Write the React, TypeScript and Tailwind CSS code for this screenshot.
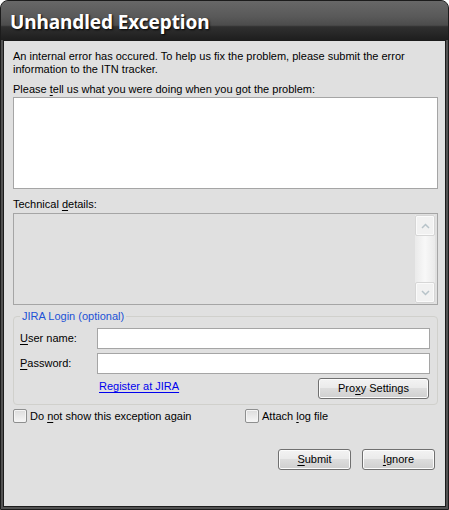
import React from "react";

const U = ({ children }: { children: React.ReactNode }) => (
  <span className="underline underline-offset-[2px]">{children}</span>
);

function Btn({ children, className = "" }: { children: React.ReactNode; className?: string }) {
  return (
    <div
      className={
        "flex items-center justify-center rounded-[3px] border border-[#707070] bg-[linear-gradient(#f3f3f3,#ebebeb_45%,#dddddd_50%,#cfcfcf)] shadow-[inset_0_0_0_1px_#fcfcfc] text-[11px] text-black " +
        className
      }
    >
      {children}
    </div>
  );
}

function Check({ children, className = "" }: { children: React.ReactNode; className?: string }) {
  return (
    <div className={"flex items-center gap-[3px] " + className}>
      <div className="w-[14px] h-[14px] border border-[#8e8f8f] rounded-[2px] bg-[linear-gradient(#dcdcdc,#f6f6f6)] shadow-[inset_0_0_0_1px_#f4f4f4]" />
      <span>{children}</span>
    </div>
  );
}

export default function App() {
  return (
    <div
      className="w-[449px] h-[510px] bg-white"
      style={{ fontFamily: '"Liberation Sans", Arial, sans-serif' }}
    >
      <div className="w-[449px] h-[510px] border border-[#1c1c1c] rounded-t-[8px] bg-[#525252] flex flex-col overflow-hidden">
        <div className="h-[39px] shrink-0 bg-[linear-gradient(#686868,#595959_40%,#4c4c4c_62%,#303030_66%,#1e1e1e)] flex items-center pl-[9px] pt-[3px]">
          <span
            className="text-white font-bold text-[19px] tracking-[-0.1px]"
            style={{ fontFamily: '"Noto Sans", sans-serif', textShadow: "1px 1px 2px #000" }}
          >
            Unhandled Exception
          </span>
        </div>
        <div className="flex-1 mx-[2px] mb-[2px] border border-[#1c1c1c] bg-[#e0e0e0] pl-[9px] pr-[7px] pt-[9px] text-[11px] leading-[13px] text-black flex flex-col">
          <div>
            An internal error has occured. To help us fix the problem, please submit the error
            <br />
            information to the ITN tracker.
          </div>
          <div className="mt-[7px]">
            Please <U>t</U>ell us what you were doing when you got the problem:
          </div>
          <div className="mt-[1px] h-[92px] border border-[#a5a5a5] bg-white" />
          <div className="mt-[9px]">
            Technical <U>d</U>etails:
          </div>
          <div className="mt-[2px] h-[92px] border border-[#a5a5a5] bg-[#e0e0e0] flex justify-end p-[1px] pr-[2px]">
            <div className="w-[20px] flex flex-col bg-[linear-gradient(90deg,#eaeaea,#f8f8f8,#eaeaea)]">
              <div className="h-[21px] border border-[#d6d6d6] rounded-[2px] bg-[#f1f1f1] shadow-[inset_0_0_0_1px_#fafafa] flex items-center justify-center">
                <svg width="9" height="6" viewBox="0 0 9 6">
                  <path d="M1 5 L4.5 1.5 L8 5" stroke="#b7c3c9" strokeWidth="1.5" fill="none" />
                </svg>
              </div>
              <div className="flex-1" />
              <div className="h-[21px] border border-[#d6d6d6] rounded-[2px] bg-[#f1f1f1] shadow-[inset_0_0_0_1px_#fafafa] flex items-center justify-center">
                <svg width="9" height="6" viewBox="0 0 9 6">
                  <path d="M1 1 L4.5 4.5 L8 1" stroke="#b7c3c9" strokeWidth="1.5" fill="none" />
                </svg>
              </div>
            </div>
          </div>
          <div className="relative mt-[11px] h-[89px] border border-[#d0d0cc] rounded-[4px] pl-[6px] pr-[7px] pt-[11px]">
            <span className="absolute left-[6px] top-[-7px] bg-[#e0e0e0] px-[2px] text-[#2052d6]">
              JIRA Login (optional)
            </span>
            <div className="flex items-center h-[21px]">
              <span className="w-[77px]">
                <U>U</U>ser name:
              </span>
              <div className="flex-1 h-[21px] border border-[#a5a5a5] bg-white" />
            </div>
            <div className="flex items-center h-[21px] mt-[4px]">
              <span className="w-[77px]">
                <U>P</U>assword:
              </span>
              <div className="flex-1 h-[21px] border border-[#a5a5a5] bg-white" />
            </div>
            <div className="flex items-start mt-[4px]">
              <span className="ml-[79px] mt-[2px] text-[#0000ee] underline underline-offset-[2px]">
                Register at JIRA
              </span>
              <Btn className="ml-auto mr-[1px] w-[111px] h-[21px]">
                Pro<U>x</U>y Settings
              </Btn>
            </div>
          </div>
          <div className="flex mt-[4px]">
            <Check className="w-[232px]">
              Do <U>n</U>ot show this exception again
            </Check>
            <Check>
              Attach <U>l</U>og file
            </Check>
          </div>
          <div className="flex justify-end gap-[11px] mt-[26px] pr-[3px]">
            <Btn className="w-[73px] h-[21px]">
              <U>S</U>ubmit
            </Btn>
            <Btn className="w-[73px] h-[21px]">
              <U>I</U>gnore
            </Btn>
          </div>
        </div>
      </div>
    </div>
  );
}
